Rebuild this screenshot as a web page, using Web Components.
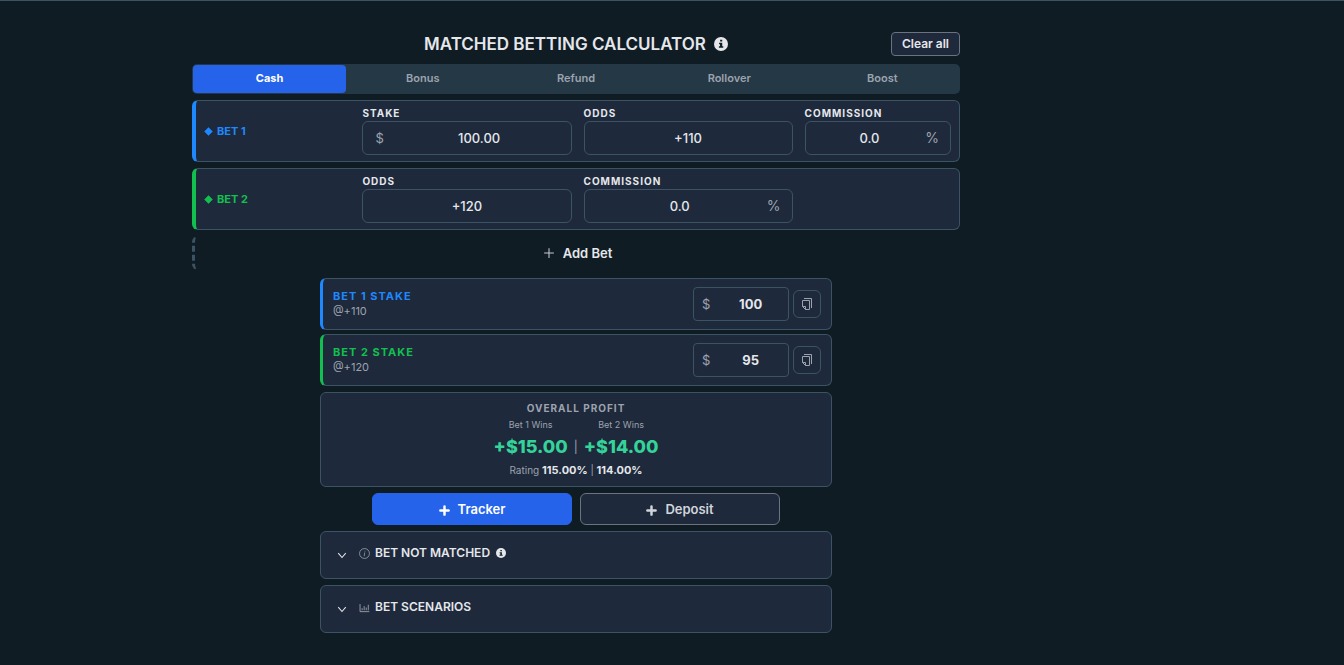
<!DOCTYPE html>
<html lang="en">
<head>
<meta charset="utf-8">
<meta name="viewport" content="width=device-width, initial-scale=1">
<title>Matched Betting Calculator</title>
<style>
  :root {
    --bg: #0f1c24;
    --card: #1e293b;
    --line: #3c5364;
    --bar: #243845;
    --text: #e5e7eb;
    --muted: #9ca3af;
    --primary: #2563eb;
    --bet1: #1e88ff;
    --bet2: #12c04f;
    --win: #34d399;
  }
  body {
    margin: 0;
    min-height: 100vh;
    box-sizing: border-box;
    border-top: 1px solid #3c5364;
    background: var(--bg);
    color: var(--text);
    font-family: Inter, "Liberation Sans", sans-serif;
    font-size: 12px;
    line-height: 16px;
  }
</style>
</head>
<body>
<calc-app></calc-app>

<script>
const ICONS = {
  info: '<svg viewBox="0 0 16 16"><circle cx="8" cy="8" r="8" fill="currentColor"/><path fill="var(--bg)" d="M7 3h2.4v2.2H7zM5.8 6.6h3.6v4h1.2v1.8H5.6v-1.8h1.3V8.3H5.8z"/></svg>',
  plus: '<svg viewBox="0 0 16 16"><path d="M8 1.500v13M1.500 8h13" fill="none" stroke="currentColor" stroke-width="1.4"/></svg>',
  plusBold: '<svg viewBox="0 0 16 16"><path d="M8 2v12M2 8h12" fill="none" stroke="currentColor" stroke-width="3.6" stroke-linecap="round"/></svg>',
  diamond: '<svg viewBox="0 0 16 16"><path d="M8 1l7 7-7 7-7-7z" fill="currentColor" stroke="currentColor" stroke-linejoin="round"/></svg>',
  copy: '<svg viewBox="0 0 12 12"><path d="M3 .5h7.500V10M1.500 2.500h7v9h-4l-3-3zM1.500 8.500h3v3" fill="none" stroke="currentColor"/></svg>',
  chevron: '<svg viewBox="0 0 16 16"><path d="M2 5l6 7 6-7" fill="none" stroke="currentColor" stroke-width="1.7"/></svg>',
  ring: '<svg viewBox="0 0 16 16"><circle cx="8" cy="8" r="7.200" fill="none" stroke="currentColor" stroke-width="1.2"/><path d="M8.600 4v1.200M8.300 6.500L7.500 12" fill="none" stroke="currentColor" stroke-width="1.1"/></svg>',
  chart: '<svg viewBox="0 0 16 16"><path d="M1.500 3v11h13.500M4.500 12V9M7.500 12V6M10.500 12V8M13.500 12V4" fill="none" stroke="currentColor" stroke-width="1.3"/></svg>'
};

function define(name, css, render, after) {
  customElements.define(name, class extends HTMLElement {
    connectedCallback() {
      if (this.shadowRoot) return;
      const root = this.attachShadow({ mode: 'open' });
      const template = document.createElement('template');
      template.innerHTML = `<style>*{box-sizing:border-box}${css}</style>${render(this)}`;
      root.append(template.content.cloneNode(true));
      if (after) after(this, root);
    }
  });
}
const attr = (el, name, fallback = '') => el.getAttribute(name) ?? fallback;

define('ui-icon', `
  :host { display: inline-block; flex: none; width: var(--size, 12px); height: var(--size, 12px); }
  svg { display: block; width: 100%; height: 100%; }
`, el => ICONS[attr(el, 'name')]);

define('page-header', `
  :host { display: grid; grid-template-columns: 1fr auto 1fr; align-items: center; height: 24px; }
  h1 { grid-column: 2; display: flex; align-items: center; gap: 8px; margin: 0; font-size: 17px; line-height: 24px; font-weight: 600; }
  ui-icon { --size: 14px; }
  button { justify-self: end; height: 24px; padding: 0 10px; border: 1px solid #6b7280; border-radius: 4px;
    background: var(--card); color: var(--text); font: 600 12px/16px Inter, sans-serif; }
`, () => `
  <h1><slot></slot><ui-icon name="info"></ui-icon></h1>
  <button type="button">Clear all</button>
`);

define('tab-bar', `
  :host { display: block; }
  div { display: grid; grid-auto-flow: column; grid-auto-columns: 1fr; padding: 1px; border-radius: 5px; background: var(--bar); }
  button { height: 28px; padding: 0 0 2px; border: 0; border-radius: 4px; background: none; color: var(--muted); font: 600 11px/16px Inter, sans-serif; }
  button[aria-selected=true] { background: var(--primary); color: #fff; font-weight: 700; }
`, el => `<div role="tablist">${attr(el, 'tabs').split(',').map((t, i) =>
  `<button type="button" role="tab" aria-selected="${i === 0}">${t}</button>`).join('')}</div>`,
(el, root) => root.addEventListener('click', e => {
  const tab = e.target.closest('button');
  if (tab) root.querySelectorAll('button').forEach(b => b.setAttribute('aria-selected', b === tab));
}));

define('bet-field', `
  :host { display: block; min-width: 0; }
  label { display: block; margin-bottom: 2px; font-size: 10px; line-height: 12px; font-weight: 700; letter-spacing: 1px; }
  .box { display: flex; align-items: center; height: 34px; border: 1px solid var(--line); border-radius: 6px; }
  input { flex: 1; min-width: 0; height: 100%; padding: 0; border: 0; outline: 0; background: none; color: var(--text);
    font: 500 13px/20px Inter, sans-serif; text-align: center; }
  span { color: var(--muted); font-size: 14px; line-height: 20px; }
  .pre { padding-left: 12px; font-size: 13px; }
  .post { padding-right: 11px; }
  .pre + input { padding-left: 4px; }
  input:not(:last-child) { padding-left: 8px; }
`, el => `
  <label for="value">${attr(el, 'label')}</label>
  <div class="box">
    ${el.hasAttribute('prefix') ? `<span class="pre">${attr(el, 'prefix')}</span>` : ''}
    <input id="value" type="text" value="${attr(el, 'value')}">
    ${el.hasAttribute('suffix') ? `<span class="post">${attr(el, 'suffix')}</span>` : ''}
  </div>
`);

define('bet-card', `
  :host { display: grid; grid-template-columns: 7fr 10fr 10fr 7fr; column-gap: 12px; align-items: center; box-sizing: border-box;
    padding: 6px 8px; border: 1px solid var(--line); border-left: 4px solid var(--accent); border-radius: 6px; background: var(--card); }
  h2 { display: flex; align-items: center; gap: 4px; margin: 0; color: var(--accent); font-size: 11px; line-height: 16px; font-weight: 700; }
  ui-icon { --size: 9px; }
`, el => `<h2><ui-icon name="diamond"></ui-icon>${attr(el, 'name')}</h2><slot></slot>`);

define('add-bet', `
  :host { display: block; }
  button { display: flex; align-items: center; justify-content: center; gap: 8px; width: 100%; height: 34px; padding: 0;
    border: 0; border-left: 3px dashed var(--line); border-radius: 6px; background: none; color: var(--text); font: 600 13px/20px Inter, sans-serif; }
  ui-icon { --size: 12px; color: #c5c9cf; }
`, () => `<button type="button"><ui-icon name="plus"></ui-icon><slot></slot></button>`);

define('stake-result', `
  :host { display: flex; align-items: center; gap: 4px; box-sizing: border-box; padding: 8px 10px;
    border: 1px solid var(--line); border-left: 3px solid var(--accent); border-radius: 6px; background: var(--card); }
  .name { flex: 1; padding-bottom: 1px; }
  label { display: block; color: var(--accent); font-size: 11px; line-height: 16px; font-weight: 700; letter-spacing: 1px; }
  small { display: block; color: var(--muted); font-size: 11px; line-height: 15px; }
  .box { display: flex; align-items: center; width: 96px; height: 34px; padding-left: 8px; border: 1px solid var(--line); border-radius: 4px; }
  .box span { color: var(--muted); font-size: 13px; line-height: 20px; }
  input { flex: 1; min-width: 0; height: 100%; padding: 0 0 0 3px; border: 0; outline: 0; background: none; color: var(--text);
    font: 700 13px/20px Inter, sans-serif; text-align: center; }
  button { display: grid; place-items: center; width: 28px; height: 28px; padding: 0; border: 1px solid var(--line); border-radius: 6px; background: none; color: var(--muted); }
`, el => `
  <div class="name"><label for="stake">${attr(el, 'name')} STAKE</label><small>@${attr(el, 'odds')}</small></div>
  <div class="box"><span>$</span><input id="stake" type="text" value="${attr(el, 'value')}"></div>
  <button type="button" aria-label="Copy stake"><ui-icon name="copy"></ui-icon></button>
`);

define('profit-card', `
  :host { display: flex; flex-direction: column; align-items: center; box-sizing: border-box; padding: 8px;
    border: 1px solid var(--line); border-radius: 6px; background: var(--card); }
  h2 { margin: 0; color: var(--muted); font-size: 10px; line-height: 14px; font-weight: 700; letter-spacing: 1px; }
  dl { display: flex; margin: 0; }
  dl div { display: flex; flex-direction: column; align-items: center; }
  dt { color: var(--muted); font-size: 9px; line-height: 19px; }
  dd { margin: 0; color: var(--win); font-size: 18px; line-height: 26px; font-weight: 800; }
  .bar { align-self: end; padding: 0 6px; color: var(--muted); font-size: 12px; line-height: 26px; }
  p { margin: 2px 0 0; color: var(--muted); font-size: 10px; line-height: 16px; }
  b { color: var(--text); font-size: 11px; font-weight: 700; }
`, () => `
  <h2>OVERALL PROFIT</h2>
  <dl>
    <div><dt>Bet 1 Wins</dt><dd>+$15.00</dd></div>
    <span class="bar">|</span>
    <div><dt>Bet 2 Wins</dt><dd>+$14.00</dd></div>
  </dl>
  <p>Rating <b>115.00%</b> | <b>114.00%</b></p>
`);

define('action-button', `
  :host { display: block; flex: 0 1 200px; }
  button { display: flex; align-items: center; justify-content: center; gap: 8px; width: 100%; height: 32px; padding: 0;
    border: 1px solid #6b7280; border-radius: 6px; background: var(--card); color: #d1d5db; font: 600 13px/20px Inter, sans-serif; }
  :host([primary]) button { border-color: var(--primary); background: var(--primary); color: #fff; }
  ui-icon { --size: 11px; margin-top: 3px; }
`, () => `<button type="button"><ui-icon name="plusBold"></ui-icon><slot></slot></button>`);

define('fold-panel', `
  :host { display: block; }
  details { border: 1px solid var(--line); border-radius: 6px; background: var(--card); }
  summary { display: flex; align-items: center; height: 46px; padding: 0 16px 4px; list-style: none; }
  summary::-webkit-details-marker { display: none; }
  h2 { margin: 0 6px 0 5px; font-size: 12px; line-height: 16px; font-weight: 600; }
  .chev { --size: 10px; margin: 3px 12px 0 0; }
  .kind { --size: 11px; color: var(--muted); }
  .tip { --size: 10px; }
  .body { padding: 0 16px 12px; }
`, el => `
  <details>
    <summary><ui-icon class="chev" name="chevron"></ui-icon><ui-icon class="kind" name="${attr(el, 'icon')}"></ui-icon>
      <h2>${attr(el, 'name')}</h2>${el.hasAttribute('tip') ? '<ui-icon class="tip" name="info"></ui-icon>' : ''}</summary>
    <div class="body"><slot></slot></div>
  </details>
`);

define('calc-app', `
  :host { display: block; padding: 31px calc(100% / 7) 32px 0; }
  main { display: flex; flex-direction: column; max-width: 768px; margin: 0 auto; }
  page-header { margin-bottom: 8px; }
  .bets { display: flex; flex-direction: column; gap: 6px; margin-top: 6px; }
  .results { display: flex; flex-direction: column; gap: 6px; width: 100%; max-width: 512px; margin: 8px auto 0; }
  .stakes { display: flex; flex-direction: column; gap: 4px; }
  .actions { display: flex; justify-content: center; gap: 8px; }
  .one { --accent: var(--bet1); }
  .two { --accent: var(--bet2); }
`, () => `
  <main>
    <page-header>MATCHED BETTING CALCULATOR</page-header>
    <tab-bar tabs="Cash,Bonus,Refund,Rollover,Boost"></tab-bar>
    <section class="bets">
      <bet-card class="one" name="BET 1">
        <bet-field label="STAKE" prefix="$" value="100.00"></bet-field>
        <bet-field label="ODDS" value="+110"></bet-field>
        <bet-field label="COMMISSION" value="0.0" suffix="%"></bet-field>
      </bet-card>
      <bet-card class="two" name="BET 2">
        <bet-field label="ODDS" value="+120"></bet-field>
        <bet-field label="COMMISSION" value="0.0" suffix="%"></bet-field>
      </bet-card>
      <add-bet>Add Bet</add-bet>
    </section>
    <section class="results">
      <div class="stakes">
        <stake-result class="one" name="BET 1" odds="+110" value="100"></stake-result>
        <stake-result class="two" name="BET 2" odds="+120" value="95"></stake-result>
      </div>
      <profit-card></profit-card>
      <div class="actions">
        <action-button primary>Tracker</action-button>
        <action-button>Deposit</action-button>
      </div>
      <fold-panel name="BET NOT MATCHED" icon="ring" tip></fold-panel>
      <fold-panel name="BET SCENARIOS" icon="chart"></fold-panel>
    </section>
  </main>
`);
</script>
</body>
</html>
